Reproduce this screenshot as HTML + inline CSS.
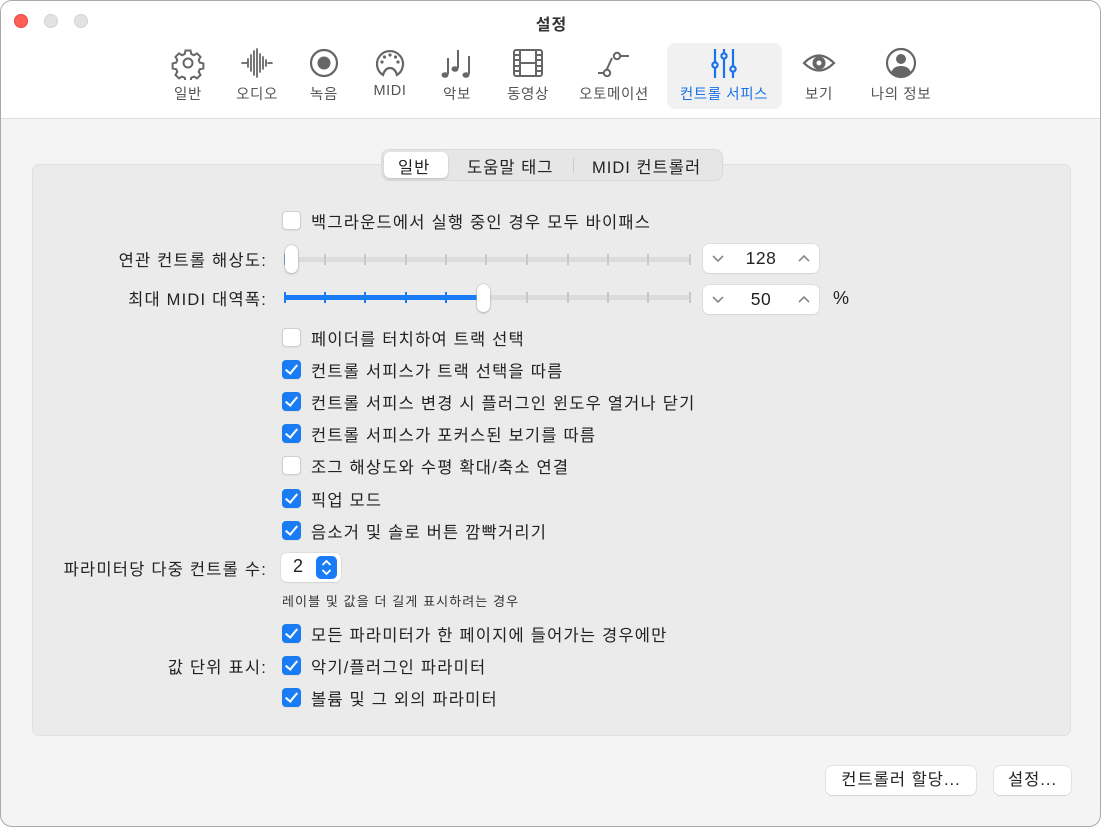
<!DOCTYPE html>
<html><head><meta charset="utf-8"><style>
*{box-sizing:border-box;margin:0;padding:0}
body{width:1101px;height:827px;background:#fff;font-family:"Liberation Sans","Noto Sans CJK KR",sans-serif;color:#222;position:relative;overflow:hidden}
.win{position:absolute;left:0;top:0;width:1101px;height:827px;border:1px solid #a8a8a8;border-radius:12px;overflow:hidden;background:#f4f4f4}
.tb{position:absolute;left:0;top:0;width:1101px;height:118px;background:#fff;border-bottom:1px solid #dedede}
.dot{position:absolute;top:13px;width:14px;height:14px;border-radius:50%;background:#e2e2e2;border:1px solid #d2d2d2}
.title{position:absolute;top:10px;left:0;width:1101px;text-align:center;font-size:16px;font-weight:bold;color:#333;letter-spacing:1px}
.it{position:absolute;top:45px;width:120px;margin-left:-60px;text-align:center;font-size:14.5px;color:#555;letter-spacing:0.6px}
.it svg{display:block;margin:0 auto 3px;width:34px;height:34px}
.sel{position:absolute;left:666px;top:42px;width:115px;height:66px;background:#f1f1f1;border-radius:8px}
.box{position:absolute;left:31px;top:163px;width:1039px;height:572px;background:#ebebeb;border:1px solid #e0e0e0;border-radius:7px}
.seg{position:absolute;left:380px;top:148px;width:342px;height:32px;background:#e6e6e6;border:1px solid #d9d9d9;border-radius:8px}
.seg span{position:absolute;top:4px;font-size:16.5px;color:#222;letter-spacing:1px;white-space:nowrap}
.segsel{position:absolute;left:2px;top:2px;width:64px;height:26px;background:#fff;border-radius:6px;box-shadow:0 1px 2px rgba(0,0,0,.2)}
.cb{position:absolute;left:281px;width:19px;height:19px;border-radius:4px;background:#fff;border:1px solid #cfcfcf;box-shadow:0 0.5px 1px rgba(0,0,0,.1)}
.cb.on{background:#1a7cf5;border-color:#1a7cf5}
.cb.on::after{content:"";position:absolute;left:5px;top:1px;width:5px;height:10px;border:solid #fff;border-width:0 2.5px 2.5px 0;transform:rotate(40deg)}
.t{position:absolute;font-size:16.5px;color:#222;white-space:nowrap;letter-spacing:1.2px}
.lab{position:absolute;right:833px;font-size:16.5px;color:#222;white-space:nowrap;text-align:right;letter-spacing:1.2px}
.track{position:absolute;left:283px;width:407px;height:5px;background:#dcdcdc;border-radius:3px}
.tick{position:absolute;width:2px;height:11px;background:#c8c8c8;top:-3px}
.thumb{position:absolute;width:13px;height:28px;background:#fff;border-radius:7px;box-shadow:0 0 0 0.5px #bbb,0 1px 2px rgba(0,0,0,.25)}
.step{position:absolute;left:702px;width:116px;height:29px;background:#fff;border-radius:6px;box-shadow:0 0 0 0.5px #d0d0d0,0 1px 1px rgba(0,0,0,.08);font-size:17.5px;text-align:center;line-height:29px;letter-spacing:0.5px}
.step svg{position:absolute;top:10px}
.btn{position:absolute;top:765px;height:29px;background:#fff;border-radius:6px;box-shadow:0 0 0 0.5px #d0d0d0,0 1px 1px rgba(0,0,0,.1);font-size:16.5px;text-align:center;line-height:29px;letter-spacing:1px}
</style></head><body>
<div class="win">
<div class="tb">
<div class="dot" style="left:13px;background:#fe5f57;border-color:#e5443d"></div>
<div class="dot" style="left:43px"></div>
<div class="dot" style="left:73px"></div>
<div class="title">설정</div>
<div class="sel"></div>

<div class="it" style="left:187px"><svg viewBox="0 0 34 34" fill="none" stroke="#666" stroke-width="2"><path d="M14.5 4.5h5l.8 3.5 2.6 1.2 3.1-1.8 3.5 3.5-1.8 3.1 1.1 2.6 3.6.8v5l-3.6.8-1.1 2.6 1.8 3.1-3.5 3.5-3.1-1.8-2.6 1.1-.8 3.6h-5l-.8-3.6-2.6-1.1-3.1 1.8-3.5-3.5 1.8-3.1-1.1-2.6-3.6-.8v-5l3.6-.8 1.1-2.6-1.8-3.1 3.5-3.500 3.1 1.8 2.6-1.2z"/><circle cx="17" cy="17" r="4.5"/></svg>일반</div>
<div class="it" style="left:256px"><svg viewBox="0 0 34 34" fill="none" stroke="#666" stroke-width="1.8" stroke-linecap="round"><path d="M2 17h5M8 13v8M11 9v16M14 5v24M17 3v28M20 8v18M23 11v12M26 14v6M28 17h4"/></svg>오디오</div>
<div class="it" style="left:323px"><svg viewBox="0 0 34 34"><circle cx="17" cy="17" r="13" fill="none" stroke="#666" stroke-width="2.2"/><circle cx="17" cy="17" r="6.5" fill="#666"/></svg>녹음</div>
<div class="it" style="left:389px"><svg viewBox="0 0 34 34" fill="none" stroke="#666" stroke-width="2.2"><path d="M10 29 A13 13 0 1 1 24 29 Q22 22 17 22 Q12 22 10 29z"/><g fill="#666" stroke="none"><circle cx="9" cy="16" r="1.6"/><circle cx="11.5" cy="11" r="1.6"/><circle cx="17" cy="9" r="1.6"/><circle cx="22.5" cy="11" r="1.6"/><circle cx="25" cy="16" r="1.6"/></g></svg>MIDI</div>
<div class="it" style="left:456px"><svg viewBox="0 0 34 34" fill="#666" stroke="#666" stroke-width="2"><ellipse cx="5" cy="29" rx="3.5" ry="2.8" stroke="none"/><path d="M8 28V12" /><ellipse cx="15" cy="23" rx="3.5" ry="2.8" stroke="none"/><path d="M18 22V4"/><ellipse cx="26" cy="29" rx="3.5" ry="2.8" stroke="none"/><path d="M29 28V10"/></svg>악보</div>
<div class="it" style="left:527px"><svg viewBox="0 0 34 34" fill="none" stroke="#666" stroke-width="2"><rect x="3" y="4" width="28" height="26" rx="2"/><path d="M9 4v26M25 4v26M9 17h16M3 9h6M3 14h6M3 20h6M3 25h6M25 9h6M25 14h6M25 20h6M25 25h6"/></svg>동영상</div>
<div class="it" style="left:613px"><svg viewBox="0 0 34 34" fill="none" stroke="#666" stroke-width="2"><path d="M1 27h6M15 12 L9.5 24M24 10h8"/><circle cx="10" cy="27" r="3.2"/><circle cx="20" cy="10" r="3.2"/></svg>오토메이션</div>
<div class="it" style="left:723px;color:#1a73e8"><svg viewBox="0 0 34 34" fill="none" stroke="#1a73e8" stroke-width="2.2"><path d="M8 3v13M8 22v10M17 3v4M17 13v19M26 3v17M26 26v6"/><circle cx="8" cy="19" r="2.6"/><circle cx="17" cy="10" r="2.6"/><circle cx="26" cy="23" r="2.6"/></svg>컨트롤 서피스</div>
<div class="it" style="left:818px"><svg viewBox="0 0 34 34" fill="none" stroke="#666" stroke-width="2.2"><path d="M2 17Q17 2 32 17Q17 32 2 17z"/><circle cx="17" cy="17" r="6.5" fill="#666" stroke="none"/><circle cx="17" cy="17" r="2.5" fill="#fff" stroke="none"/></svg>보기</div>
<div class="it" style="left:900px"><svg viewBox="0 0 34 34"><circle cx="17" cy="17" r="14" fill="none" stroke="#666" stroke-width="2.2"/><circle cx="17" cy="13" r="5" fill="#666"/><path d="M7 27Q9 20 17 20Q25 20 27 27Q17 34 7 27z" fill="#666"/></svg>나의 정보</div>
</div>

<div class="box"></div>
<div class="seg"><div class="segsel"></div>
<span style="left:16px">일반</span><span style="left:85px">도움말 태그</span>
<div style="position:absolute;left:191px;top:8px;width:1px;height:15px;background:#ccc"></div>
<span style="left:210px">MIDI 컨트롤러</span></div>

<div class="cb" style="top:210px"></div><div class="t" style="left:310px;top:208px">백그라운드에서 실행 중인 경우 모두 바이패스</div>

<div class="lab" style="top:246px">연관 컨트롤 해상도:</div>
<div class="track" style="top:256px">
<div class="tick" style="left:40px"></div><div class="tick" style="left:80px"></div><div class="tick" style="left:121px"></div><div class="tick" style="left:161px"></div><div class="tick" style="left:201px"></div><div class="tick" style="left:242px"></div><div class="tick" style="left:283px"></div><div class="tick" style="left:323px"></div><div class="tick" style="left:363px"></div><div class="tick" style="left:405px"></div>
<div style="position:absolute;left:0;top:-3px;width:3px;height:11px;background:#1a7cf5"></div>
</div>
<div class="thumb" style="left:284px;top:244px"></div>
<div class="step" style="top:243px"><svg style="left:9px" width="12" height="9" viewBox="0 0 12 9"><path d="M1 2l5 5 5-5" fill="none" stroke="#888" stroke-width="1.6"/></svg>128<svg style="right:9px" width="12" height="9" viewBox="0 0 12 9"><path d="M1 7l5-5 5 5" fill="none" stroke="#888" stroke-width="1.6"/></svg></div>

<div class="lab" style="top:285px">최대 MIDI 대역폭:</div>
<div class="track" style="top:294px">
<div style="position:absolute;left:0;top:0;width:200px;height:5px;background:#1a7cf5;border-radius:3px"></div>
<div class="tick" style="left:0;background:#1a7cf5"></div><div class="tick" style="left:40px;background:#1a7cf5"></div><div class="tick" style="left:80px;background:#1a7cf5"></div><div class="tick" style="left:121px;background:#1a7cf5"></div><div class="tick" style="left:161px;background:#1a7cf5"></div><div class="tick" style="left:242px"></div><div class="tick" style="left:283px"></div><div class="tick" style="left:323px"></div><div class="tick" style="left:363px"></div><div class="tick" style="left:405px"></div>
</div>
<div class="thumb" style="left:476px;top:283px"></div>
<div class="step" style="top:284px"><svg style="left:9px" width="12" height="9" viewBox="0 0 12 9"><path d="M1 2l5 5 5-5" fill="none" stroke="#888" stroke-width="1.6"/></svg>50<svg style="right:9px" width="12" height="9" viewBox="0 0 12 9"><path d="M1 7l5-5 5 5" fill="none" stroke="#888" stroke-width="1.6"/></svg></div>
<div class="t" style="left:832px;top:287px;font-size:18px">%</div>

<div class="cb" style="top:327px"></div><div class="t" style="left:310px;top:325px">페이더를 터치하여 트랙 선택</div>
<div class="cb on" style="top:359px"></div><div class="t" style="left:310px;top:357px">컨트롤 서피스가 트랙 선택을 따름</div>
<div class="cb on" style="top:391px"></div><div class="t" style="left:310px;top:389px">컨트롤 서피스 변경 시 플러그인 윈도우 열거나 닫기</div>
<div class="cb on" style="top:423px"></div><div class="t" style="left:310px;top:421px">컨트롤 서피스가 포커스된 보기를 따름</div>
<div class="cb" style="top:455px"></div><div class="t" style="left:310px;top:453px">조그 해상도와 수평 확대/축소 연결</div>
<div class="cb on" style="top:488px"></div><div class="t" style="left:310px;top:486px">픽업 모드</div>
<div class="cb on" style="top:520px"></div><div class="t" style="left:310px;top:518px">음소거 및 솔로 버튼 깜빡거리기</div>

<div class="lab" style="top:555px">파라미터당 다중 컨트롤 수:</div>
<div style="position:absolute;left:280px;top:552px;width:60px;height:29px;background:#fff;border-radius:6px;box-shadow:0 0 0 0.5px #d0d0d0,0 1px 1px rgba(0,0,0,.1)">
<span style="position:absolute;left:12px;top:3px;font-size:18px">2</span>
<div style="position:absolute;left:35px;top:3px;width:21px;height:23px;background:#1a7cf5;border-radius:5px"><svg width="21" height="23" viewBox="0 0 21 23"><path d="M6.5 9l4-4 4 4M6.5 14l4 4 4-4" fill="none" stroke="#fff" stroke-width="1.8"/></svg></div></div>
<div class="t" style="left:281px;top:590px;font-size:13px;color:#333;letter-spacing:1.1px">레이블 및 값을 더 길게 표시하려는 경우</div>

<div class="cb on" style="top:623px"></div><div class="t" style="left:310px;top:621px">모든 파라미터가 한 페이지에 들어가는 경우에만</div>
<div class="lab" style="top:653px">값 단위 표시:</div>
<div class="cb on" style="top:655px"></div><div class="t" style="left:310px;top:653px">악기/플러그인 파라미터</div>
<div class="cb on" style="top:687px"></div><div class="t" style="left:310px;top:685px">볼륨 및 그 외의 파라미터</div>

<div class="btn" style="left:825px;width:150px">컨트롤러 할당...</div>
<div class="btn" style="left:993px;width:77px">설정...</div>
</div>
</body></html>
